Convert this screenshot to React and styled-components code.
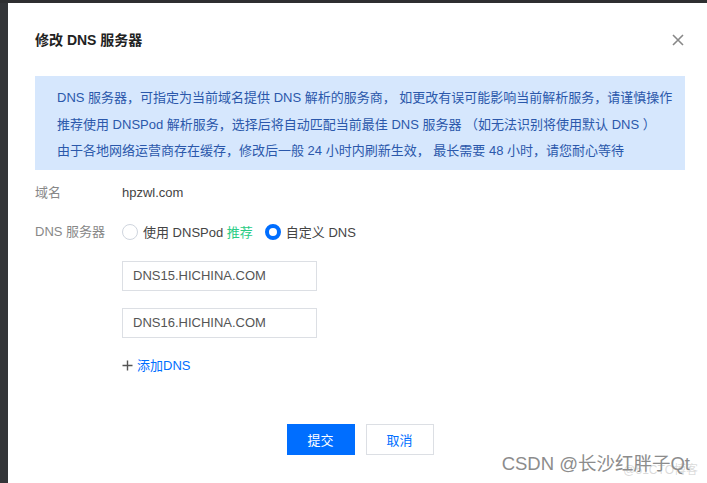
import styled, { createGlobalStyle } from "styled-components";

const GlobalStyle = createGlobalStyle`
  html, body {
    margin: 0;
    padding: 0;
    width: 707px;
    height: 483px;
    overflow: hidden;
    background: #fff;
    font-family: "Liberation Sans", "Noto Sans CJK SC", sans-serif;
  }
`;

const Screen = styled.div`
  position: relative;
  display: flex;
  width: 707px;
  height: 483px;
  background: #2e2f31;
  padding-top: 3px;
  box-sizing: border-box;
`;

const Backdrop = styled.div`
  width: 8px;
  flex: none;
  background: #333538;
`;

const Dialog = styled.div`
  flex: none;
  width: 704px;
  background: #fff;
  padding: 27px 27px 0 27px;
  box-sizing: border-box;
  display: flex;
  flex-direction: column;
`;

const Header = styled.div`
  display: flex;
  align-items: center;
  justify-content: space-between;
  height: 20px;
`;

const Title = styled.h3`
  margin: 0;
  font-size: 14px;
  font-weight: 700;
  color: #222;
  line-height: 20px;
`;

const Close = styled.button`
  border: 0;
  background: none;
  padding: 0;
  margin-right: 1px;
  width: 12px;
  height: 12px;
  display: flex;
  cursor: pointer;
`;

const Notice = styled.div`
  margin-top: 26px;
  background: #d6e7fd;
  color: #2b58ab;
  font-size: 13px;
  line-height: 26.5px;
  padding: 9px 10px 5px 22px;
`;

const Row = styled.div`
  display: flex;
  align-items: center;
  margin-top: ${(p) => p.$gap}px;
  min-height: 20px;
  font-size: 13px;
`;

const Label = styled.div`
  width: 87px;
  flex: none;
  color: #888;
  line-height: 20px;
`;

const Value = styled.div`
  color: #444;
  display: flex;
  align-items: center;
  line-height: 20px;
`;

const RadioGroup = styled.div`
  display: flex;
  align-items: center;
  gap: 12px;
`;

const RadioItem = styled.label`
  display: flex;
  align-items: center;
  gap: 5px;
  color: #444;
  cursor: pointer;
`;

const RadioDot = styled.span`
  width: 16px;
  height: 16px;
  border-radius: 50%;
  box-sizing: border-box;
  border: ${(p) => (p.$checked ? "4px solid #006eff" : "1px solid #cfd5de")};
  background: #fff;
`;

const Recommend = styled.span`
  color: #29cc85;
`;

const Fields = styled.div`
  display: flex;
  flex-direction: column;
  padding-left: 87px;
  margin-top: 19px;
  gap: 17px;
`;

const Input = styled.input`
  width: 195px;
  height: 30px;
  box-sizing: border-box;
  border: 1px solid #dcdfe4;
  padding: 0 10px;
  font-size: 13px;
  color: #555;
  font-family: inherit;
  outline: none;
`;

const AddLink = styled.a`
  display: flex;
  align-items: center;
  gap: 4px;
  margin: 18px 0 0 87px;
  color: #006eff;
  font-size: 13px;
  line-height: 20px;
  cursor: pointer;
`;

const Footer = styled.div`
  display: flex;
  justify-content: center;
  gap: 11px;
  margin-top: 48px;
`;

const Button = styled.button`
  width: 68px;
  height: 31px;
  box-sizing: border-box;
  font-size: 13px;
  font-family: inherit;
  cursor: pointer;
  border: 1px solid ${(p) => (p.$primary ? "#006eff" : "#dcdfe4")};
  background: ${(p) => (p.$primary ? "#006eff" : "#fff")};
  color: ${(p) => (p.$primary ? "#fff" : "#006eff")};
`;

const Watermark = styled.div`
  position: absolute;
  right: 17px;
  bottom: 8px;
  font-size: 18.5px;
  color: #8c8c8c;
  white-space: nowrap;
`;

const WatermarkShadow = styled.span`
  position: absolute;
  right: -8px;
  bottom: -2px;
  font-size: 12px;
  color: rgba(150, 150, 150, 0.35);
`;

export default function App() {
  return (
    <>
      <GlobalStyle />
      <Screen>
        <Backdrop />
        <Dialog>
          <Header>
            <Title>修改 DNS 服务器</Title>
            <Close aria-label="关闭">
              <svg width="12" height="12" viewBox="0 0 12 12">
                <path d="M1 1L11 11M11 1L1 11" stroke="#888" strokeWidth="1.6" />
              </svg>
            </Close>
          </Header>
          <Notice>
            <div>DNS 服务器，可指定为当前域名提供 DNS 解析的服务商， 如更改有误可能影响当前解析服务，请谨慎操作</div>
            <div>推荐使用 DNSPod 解析服务，选择后将自动匹配当前最佳 DNS 服务器 （如无法识别将使用默认 DNS ）</div>
            <div>由于各地网络运营商存在缓存，修改后一般 24 小时内刷新生效， 最长需要 48 小时，请您耐心等待</div>
          </Notice>
          <Row $gap={13}>
            <Label>域名</Label>
            <Value>hpzwl.com</Value>
          </Row>
          <Row $gap={19}>
            <Label>DNS 服务器</Label>
            <RadioGroup>
              <RadioItem>
                <RadioDot />
                <span>
                  使用 DNSPod <Recommend>推荐</Recommend>
                </span>
              </RadioItem>
              <RadioItem>
                <RadioDot $checked />
                <span>自定义 DNS</span>
              </RadioItem>
            </RadioGroup>
          </Row>
          <Fields>
            <Input defaultValue="DNS15.HICHINA.COM" />
            <Input defaultValue="DNS16.HICHINA.COM" />
          </Fields>
          <AddLink>
            <svg width="11" height="11" viewBox="0 0 11 11">
              <path d="M5.5 0.5V10.5M0.5 5.5H10.5" stroke="#555" strokeWidth="1.4" />
            </svg>
            添加DNS
          </AddLink>
          <Footer>
            <Button $primary>提交</Button>
            <Button>取消</Button>
          </Footer>
        </Dialog>
        <Watermark>
          CSDN @长沙红胖子Qt
          <WatermarkShadow>@51CTO博客</WatermarkShadow>
        </Watermark>
      </Screen>
    </>
  );
}
